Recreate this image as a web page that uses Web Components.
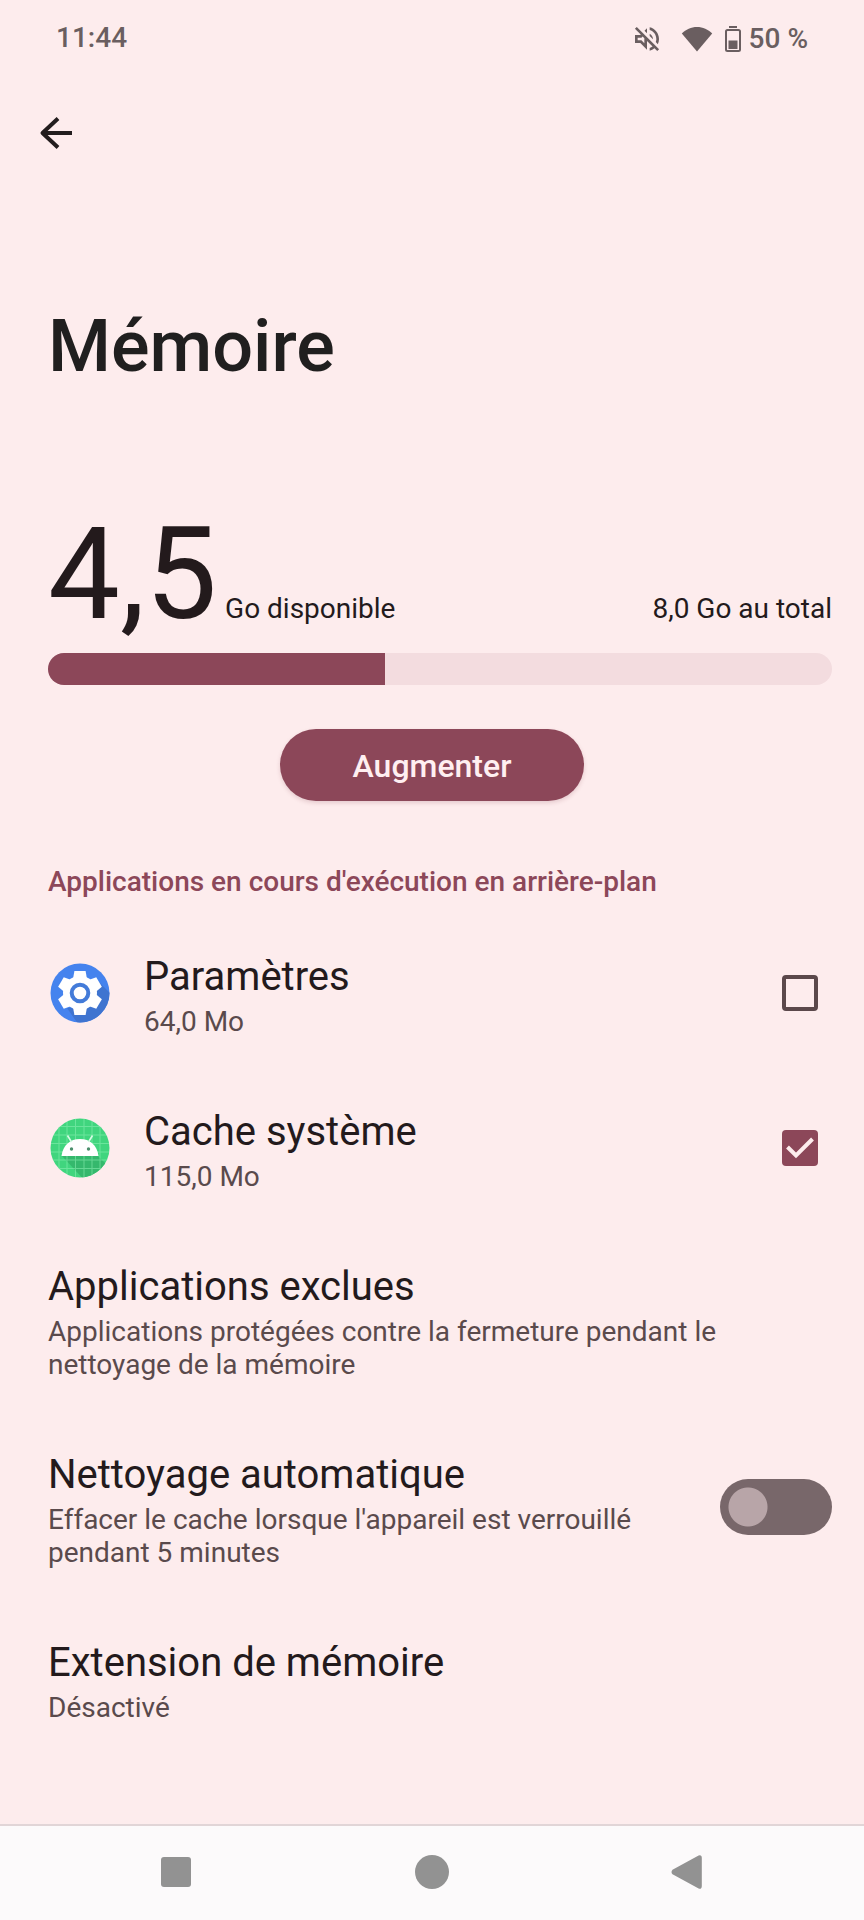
<!DOCTYPE html>
<html lang="fr">
<head>
<meta charset="utf-8">
<meta name="viewport" content="width=device-width, initial-scale=1">
<title>Mémoire</title>
<style>
:root {
  --bg: #fdeced;
  --ink: #231a1c;
  --muted: #5a4a4c;
  --primary: #8c4759;
  --track: #f3dcdf;
  --status: #6a5e60;
}
body { margin: 0; background: var(--bg); color: var(--ink); font-family: Roboto, sans-serif; }
</style>
</head>
<body>
<memory-screen></memory-screen>

<template id="t-status">
  <style>
    :host { display: flex; justify-content: space-between; align-items: center; height: 76px; padding: 0 56px; color: var(--status); font-size: 28px; line-height: 32px; font-weight: 500; }
    .right { display: flex; align-items: center; padding-top: 2px; }
    svg { display: block; }
    .mute { margin-right: 18px; }
    .wifi { margin-right: 12px; }
    .bat { margin-right: 8px; }
  </style>
  <time><slot name="time"></slot></time>
  <div class="right">
    <svg class="mute" width="32" height="32" viewBox="0 0 24 24" fill="currentColor" aria-hidden="true"><path d="M4.340 2.930L2.930 4.340 7.290 8.700 7 9H3v6h4l5 5v-6.590l4.180 4.180c-.65.49-1.380.88-2.180 1.110v2.060c1.340-.3 2.570-.92 3.610-1.750l2.050 2.050 1.410-1.410L4.340 2.930zM10 15.170L7.830 13H5v-2h2.830l.88-.88L10 11.410v3.760zM19 12c0 .82-.15 1.610-.41 2.340l1.530 1.530c.56-1.170.88-2.480.88-3.870 0-4.280-2.990-7.860-7-8.770v2.060c2.890.86 5 3.540 5 6.710zm-7-8l-1.880 1.880L12 7.760zm4.500 8c0-1.770-1.020-3.290-2.500-4.030v1.790l2.480 2.480c.01-.08.02-.16.02-.24z"/></svg>
    <svg class="wifi" width="32" height="28" viewBox="0 0 32 28" fill="currentColor" aria-hidden="true"><path d="M16 26.500L.8 8.500C5 4.500 10 2 16 2s11 2.500 15.200 6.500z"/></svg>
    <svg class="bat" width="16" height="26" viewBox="0 0 16 26" fill="none" stroke="currentColor" aria-hidden="true"><path d="M4 1h8" stroke-width="2"/><rect x="1" y="4" width="14" height="21" rx="1.500" stroke-width="2"/><path d="M3.500 14.500h9v8.500h-9z" fill="currentColor" stroke="none"/></svg>
    <span><slot name="level"></slot></span>
  </div>
</template>

<template id="t-header">
  <style>
    :host { display: block; padding: 21px 24px 0; }
    button { display: flex; align-items: center; justify-content: center; width: 64px; height: 72px; border: 0; padding: 0; background: none; color: #231d1e; }
    h1 { margin: 136px 24px 0; font-size: 72px; line-height: 84px; font-weight: 500; color: #201f1f; }
  </style>
  <button type="button" aria-label="Retour">
    <svg width="48" height="48" viewBox="0 0 48 48" fill="none" stroke="currentColor" stroke-width="4" aria-hidden="true"><path d="M40 24H11M26 9.500L10.500 24 26 38.500" stroke-linejoin="round"/></svg>
  </button>
  <h1><slot></slot></h1>
</template>

<template id="t-usage">
  <style>
    :host { display: block; margin: 110px 32px 0 48px; }
    .figures { display: flex; justify-content: space-between; align-items: baseline; font-size: 28px; line-height: 33px; }
    .free { display: flex; align-items: baseline; gap: 8px; }
    .big { font-size: 128px; line-height: 150px; }
    .bar { height: 32px; margin-top: 4px; border-radius: 16px; background: var(--track); overflow: hidden; }
    .fill { height: 100%; width: 43%; background: var(--primary); }
    button { display: block; margin: 44px auto 0; width: 304px; height: 72px; padding: 2px 0 0; border: 0; border-radius: 36px; background: var(--primary); color: #ffeff1; font: 500 32px/38px Roboto, sans-serif; box-shadow: 0 2px 4px rgba(120, 50, 65, .18); }
    .center { margin-left: -48px; margin-right: -32px; }
  </style>
  <div class="figures">
    <div class="free"><span class="big"><slot name="amount"></slot></span><span><slot name="unit"></slot></span></div>
    <span><slot name="total"></slot></span>
  </div>
  <div class="bar" role="progressbar" aria-label="Mémoire utilisée" aria-valuenow="43" aria-valuemin="0" aria-valuemax="100"><div class="fill"></div></div>
  <div class="center"><button type="button"><slot name="action"></slot></button></div>
</template>

<template id="t-section">
  <style>
    :host { display: block; margin: 64px 32px 17px 48px; color: var(--primary); }
    h2 { margin: 0; font-size: 28px; line-height: 33px; font-weight: 500; }
  </style>
  <h2><slot></slot></h2>
</template>

<template id="t-row">
  <style>
    :host { display: block; }
    .row { display: flex; align-items: center; padding: 32px 32px 32px 48px; color: inherit; text-decoration: none; }
    .text { flex: 1; min-width: 0; display: flex; flex-direction: column; gap: 4px; padding-top: 6px; }
    .title { font-size: 40px; line-height: 48px; color: var(--ink); }
    .sub { font-size: 28px; line-height: 33px; color: var(--muted); }
    ::slotted(svg) { display: block; width: 64px; height: 64px; margin-right: 32px; }
    input { appearance: none; flex: none; margin: 0; }
    .check { width: 36px; height: 36px; margin-right: 14px; border: 4px solid #5b484b; border-radius: 4px; }
    .check:checked { border: 0; background: var(--primary) url("data:image/svg+xml,%3Csvg xmlns='http://www.w3.org/2000/svg' viewBox='0 0 36 36'%3E%3Cpath d='M5.500 17l8.500 8.500L30.500 9' fill='none' stroke='%23fdeced' stroke-width='4'/%3E%3C/svg%3E"); }
    .switch { width: 112px; height: 56px; margin-left: 32px; border-radius: 28px; background: radial-gradient(circle at 28px 28px, #b8a5a8 19px, #78676a 20px); }
  </style>
</template>

<template id="t-nav">
  <style>
    :host { display: block; margin-top: auto; }
    nav { display: flex; padding: 0 48px 2px; height: 92px; border-top: 2px solid #e1d5d7; background: #fcfafb; }
    button { flex: 1; display: flex; align-items: center; justify-content: center; border: 0; padding: 0; background: none; color: #929292; }
  </style>
  <nav aria-label="Navigation système">
    <button type="button" aria-label="Applications récentes"><svg width="34" height="34" viewBox="0 0 34 34" fill="currentColor"><rect x="2" y="2" width="30" height="30" rx="3"/></svg></button>
    <button type="button" aria-label="Accueil"><svg width="34" height="34" viewBox="0 0 34 34" fill="currentColor"><circle cx="17" cy="17" r="17"/></svg></button>
    <button type="button" aria-label="Précédent"><svg width="34" height="34" viewBox="0 0 34 34" fill="currentColor"><path d="M1.500 14.700L27.600.4Q30.800-.6 30.800 3V31q0 3.600-3.200 2.600L1.500 19.300q-2-2.300 0-4.600z"/></svg></button>
  </nav>
</template>

<template id="t-screen">
  <style>
    :host { display: flex; flex-direction: column; min-height: 100vh; }
  </style>
  <status-bar><span slot="time">11:44</span><span slot="level">50 %</span></status-bar>
  <screen-header>Mémoire</screen-header>
  <main>
    <memory-usage>
      <span slot="amount">4,5</span><span slot="unit">Go disponible</span>
      <span slot="total">8,0 Go au total</span><span slot="action">Augmenter</span>
    </memory-usage>
    <section-title>Applications en cours d'exécution en arrière-plan</section-title>
    <setting-row kind="check">
      <svg slot="icon" viewBox="0 0 64 64" aria-hidden="true">
        <defs><clipPath id="disc"><circle cx="32" cy="32" r="29.500"/></clipPath></defs>
        <circle cx="32" cy="32" r="29.500" fill="#4583ee"/>
        <path d="M51 21L70 40V70H35L19 47l20-1z" fill="#3f74d0" clip-path="url(#disc)"/>
        <g fill="#fff"><circle cx="32" cy="32" r="17"/>
          <path d="M25 18l1.400-8h11.200l1.400 8z"/>
          <path d="M25 18l1.400-8h11.200l1.400 8z" transform="rotate(60 32 32)"/>
          <path d="M25 18l1.400-8h11.200l1.400 8z" transform="rotate(120 32 32)"/>
          <path d="M25 18l1.400-8h11.200l1.400 8z" transform="rotate(180 32 32)"/>
          <path d="M25 18l1.400-8h11.200l1.400 8z" transform="rotate(240 32 32)"/>
          <path d="M25 18l1.400-8h11.200l1.400 8z" transform="rotate(300 32 32)"/>
        </g>
        <circle cx="32" cy="32" r="8.300" fill="#fff" stroke="#437bd9" stroke-width="4"/>
      </svg>
      <span slot="title">Paramètres</span><span slot="sub">64,0 Mo</span>
    </setting-row>
    <setting-row kind="check" checked>
      <svg slot="icon" viewBox="0 0 64 64" aria-hidden="true">
        <defs><clipPath id="disc2"><circle cx="32" cy="32" r="29.500"/></clipPath></defs>
        <circle cx="32" cy="32" r="29.500" fill="#40d67f"/>
        <g clip-path="url(#disc2)">
          <path d="M14 40h36l16 16v10H38z" fill="#36b96e"/>
          <path d="M11 0v64M19 0v64M27.500 0v64M36 0v64M44 0v64M52 0v64M0 10.500h64M0 19h64M0 27.500h64M0 36h64M0 44h64M0 52.500h64" stroke="#8df0b4" stroke-width="1" opacity=".55"/>
        </g>
        <path d="M13.500 40C15 29 22 23 32 23s17 6 18.500 17z" fill="#fff"/>
        <path d="M23.500 26l-4-6.500M40.500 26l4-6.500" stroke="#d9fbe6" stroke-width="1.600"/>
        <circle cx="23.500" cy="33" r="1.700" fill="#4c8f6c"/><circle cx="40.500" cy="33" r="1.700" fill="#4c8f6c"/>
      </svg>
      <span slot="title">Cache système</span><span slot="sub">115,0 Mo</span>
    </setting-row>
    <setting-row kind="link"><span slot="title">Applications exclues</span><span slot="sub">Applications protégées contre la fermeture pendant le nettoyage de la mémoire</span></setting-row>
    <setting-row kind="switch"><span slot="title">Nettoyage automatique</span><span slot="sub">Effacer le cache lorsque l'appareil est verrouillé pendant 5 minutes</span></setting-row>
    <setting-row kind="link"><span slot="title">Extension de mémoire</span><span slot="sub">Désactivé</span></setting-row>
  </main>
  <system-nav></system-nav>
</template>

<script>
const define = (name, templateId, setup) => customElements.define(name, class extends HTMLElement {
  constructor() {
    super();
    this.attachShadow({ mode: "open" }).append(document.getElementById(templateId).content.cloneNode(true));
  }
  connectedCallback() {
    if (setup && !this.ready) { this.ready = true; setup(this); }
  }
});

define("status-bar", "t-status");
define("screen-header", "t-header");
define("memory-usage", "t-usage");
define("section-title", "t-section");
define("system-nav", "t-nav");

// A row is a link, or a label tied to its tick box or switch.
define("setting-row", "t-row", host => {
  const kind = host.getAttribute("kind");
  const row = document.createElement(kind === "link" ? "a" : "label");
  row.className = "row";
  row.innerHTML = `<slot name="icon"></slot><span class="text"><span class="title"><slot name="title"></slot></span><span class="sub"><slot name="sub"></slot></span></span>`;
  if (kind === "link") {
    row.href = "#";
  } else {
    const input = document.createElement("input");
    input.type = "checkbox";
    input.id = "control";
    input.className = kind;
    input.checked = host.hasAttribute("checked");
    if (kind === "switch") input.setAttribute("role", "switch");
    row.htmlFor = "control";
    row.append(input);
  }
  host.shadowRoot.append(row);
});

define("memory-screen", "t-screen");
</script>
</body>
</html>
